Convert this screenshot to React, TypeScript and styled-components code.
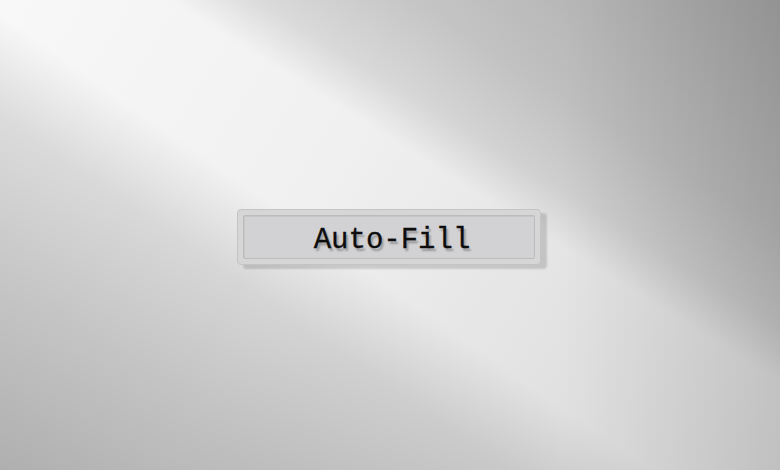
import React from "react";
import styled, { createGlobalStyle } from "styled-components";

const GlobalStyle = createGlobalStyle`
  html, body {
    margin: 0;
    padding: 0;
    width: 100%;
    height: 100%;
    overflow: hidden;
  }
  #root {
    width: 100%;
    height: 100%;
  }
`;

/* Brushed-metal backdrop: a bright diagonal beam between two darker flanks */
const Stage = styled.main`
  width: 100vw;
  height: 100vh;
  display: flex;
  align-items: center;
  justify-content: center;
  background-color: #eeeeee;
  background-image:
    linear-gradient(90deg, rgba(0, 0, 0, 0) 72%, rgba(0, 0, 0, 0.1) 100%),
    linear-gradient(
      32deg,
      rgba(0, 0, 0, 0) 60%,
      rgba(0, 0, 0, 0.1) 66%,
      rgba(0, 0, 0, 0.18) 76%,
      rgba(0, 0, 0, 0.28) 100%
    ),
    linear-gradient(
      215deg,
      rgba(0, 0, 0, 0) 55%,
      rgba(0, 0, 0, 0.11) 65%,
      rgba(0, 0, 0, 0.19) 80%,
      rgba(0, 0, 0, 0.28) 100%
    ),
    linear-gradient(
      122deg,
      rgba(255, 255, 255, 0.6) 0%,
      rgba(255, 255, 255, 0.1) 42%,
      rgba(0, 0, 0, 0.1) 100%
    );
`;

const Plate = styled.button`
  box-sizing: border-box;
  width: 304px;
  height: 56px;
  margin: 3px 0 0 -2px;
  padding: 5px;
  display: flex;
  align-items: stretch;
  border: 1px solid #c4c4c4;
  border-radius: 4px;
  background: #d6d6d7;
  box-shadow: 6px 4px 2px rgba(0, 0, 0, 0.14);
  cursor: pointer;
`;

const Face = styled.span`
  flex: 1;
  display: flex;
  align-items: center;
  justify-content: center;
  padding: 8px 0 0 6px;
  border: 1px solid #bcbcbc;
  border-radius: 2px;
  background: #d2d2d4;
  box-shadow: inset 1px 1px 0 #c6c6c6;
  font-family: "Liberation Mono", "Courier New", monospace;
  font-size: 29px;
  color: #0d0d0d;
  -webkit-text-stroke: 0.3px #0d0d0d;
  text-shadow: 2px 3px 2px rgba(0, 0, 0, 0.28);
`;

export default function App() {
  return (
    <>
      <GlobalStyle />
      <Stage>
        <Plate type="button">
          <Face>Auto-Fill</Face>
        </Plate>
      </Stage>
    </>
  );
}
